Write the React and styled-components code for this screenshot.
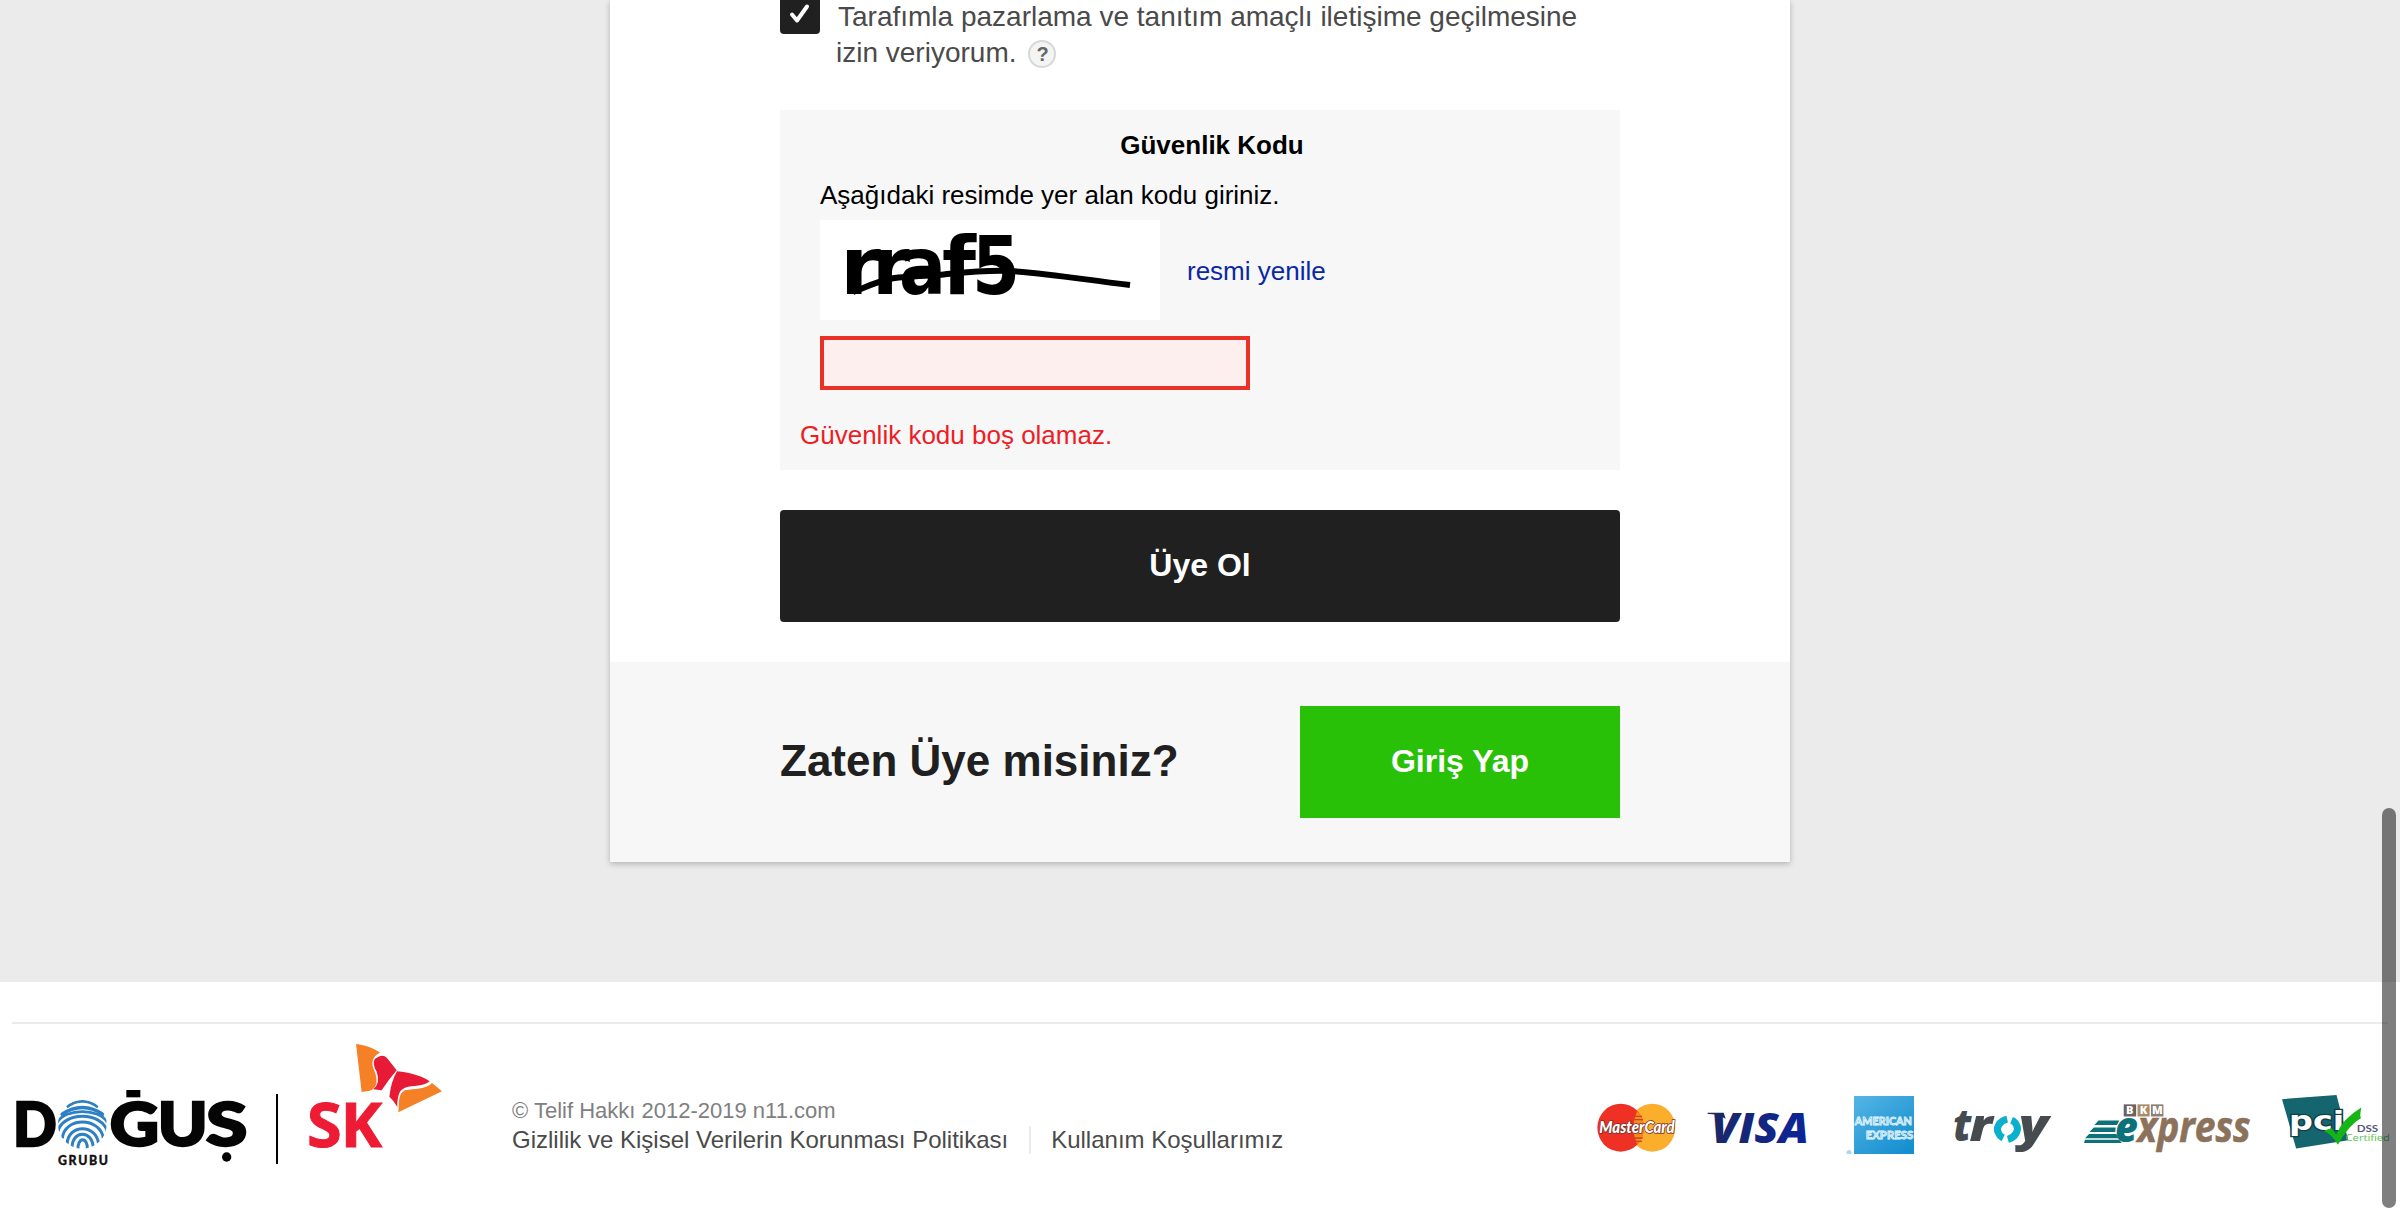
import React from "react";
import styled, { createGlobalStyle } from "styled-components";

const Global = createGlobalStyle`
  * { box-sizing: border-box; }
  html, body { margin: 0; height: 1212px; overflow: hidden; background: #fff; }
  body { font-family: "Liberation Sans", Arial, sans-serif; font-size: 26px; line-height: 36px; color: #000; }
`;

const Page = styled.div`
  height: 1212px;
  overflow: hidden;
`;
const Main = styled.main`
  display: flex;
  justify-content: center;
  align-items: flex-start;
  height: 982px;
  background: #ebebeb;
`;
const Card = styled.section`
  width: 1180px;
  height: 862px;
  background: #fff;
  box-shadow: 0 2px 6px rgba(0, 0, 0, 0.24);
`;
const FormArea = styled.div`
  display: flex;
  flex-direction: column;
  height: 662px;
  padding: 0 170px;
`;
const Consent = styled.label`
  display: flex;
  align-items: flex-start;
  gap: 16px;
  margin-top: -6px;
  height: 116px;
  flex: none;
`;
const Check = styled.span`
  display: flex;
  align-items: center;
  justify-content: center;
  flex: none;
  width: 40px;
  height: 40px;
  border-radius: 4px;
  background: #202020;
`;
const ConsentText = styled.span`
  display: flex;
  flex-direction: column;
  padding-top: 5px;
  color: #4a4a4a;
  font-size: 28px;
  white-space: nowrap;
`;
const ConsentLine = styled.span`
  display: flex;
  align-items: center;
  height: 36px;
  padding-left: ${(p) => p.$indent || "0"};
`;
const Help = styled.span`
  display: flex;
  align-items: center;
  justify-content: center;
  width: 28px;
  height: 28px;
  margin: 2px 0 0 12px;
  border: 2px solid #d8d8d8;
  border-radius: 50%;
  background: #f4f4f4;
  color: #666;
  font-size: 20px;
  font-weight: bold;
  line-height: 24px;
`;
const Captcha = styled.div`
  height: 360px;
  flex: none;
  padding: 17px 0 0 24px;
  background: #f7f7f7;
`;
const CaptchaTitle = styled.h3`
  margin: 0 0 14px;
  font-size: 26px;
  line-height: 36px;
  text-align: center;
`;
const CaptchaBody = styled.div`
  display: flex;
  flex-direction: column;
  align-items: flex-start;
  padding-left: 16px;
`;
const ImageRow = styled.div`
  display: flex;
  align-items: center;
  gap: 27px;
  margin: 7px 0 16px;
`;
const Picture = styled.svg`
  display: block;
  width: 340px;
  height: 100px;
  background: #fff;
`;
const Refresh = styled.a`
  padding-top: 2px;
  color: #0a28a3;
`;
const CodeInput = styled.input`
  display: block;
  width: 430px;
  height: 54px;
  margin: 0;
  padding: 0 10px;
  border: 4px solid #e93127;
  border-radius: 0;
  background: #feefef;
  outline: none;
`;
const ErrorText = styled.p`
  margin: 27px 0 0 -4px;
  color: #ee1c25;
`;
const Button = styled.button`
  display: flex;
  align-items: center;
  justify-content: center;
  width: ${(p) => p.$width};
  height: 112px;
  flex: none;
  margin: ${(p) => p.$margin || 0};
  padding: 0 0 3px;
  border: 0;
  border-radius: ${(p) => p.$radius || 0};
  background: ${(p) => p.$bg};
  color: #fff;
  font: bold 32px/40px "Liberation Sans", Arial, sans-serif;
`;
const LoginArea = styled.div`
  display: flex;
  align-items: center;
  justify-content: space-between;
  height: 200px;
  padding: 0 170px;
  background: #f7f7f7;
`;
const LoginTitle = styled.h2`
  margin: 0;
  padding-bottom: 3px;
  color: #202020;
  font-size: 44px;
  line-height: 54px;
`;
const Footer = styled.footer`
  height: 190px;
  margin: 40px 12px 0;
  border-top: 2px solid #ebebeb;
  display: flex;
  align-items: flex-start;
`;
const Logo = styled.svg`
  display: block;
  flex: none;
  overflow: visible;
  width: ${(p) => p.$w}px;
  height: ${(p) => p.$h}px;
  margin: ${(p) => p.$top}px 0 0 ${(p) => p.$left || 0}px;
`;
const LogoDivider = styled.span`
  flex: none;
  width: 2px;
  height: 70px;
  margin: 70px 0 0 29px;
  background: #000;
`;
const Legal = styled.div`
  margin: 73px 0 0 69px;
  white-space: nowrap;
`;
const Copyright = styled.div`
  color: #808080;
  font-size: 22px;
  line-height: 28px;
`;
const Links = styled.div`
  display: flex;
  align-items: center;
  height: 28px;
  margin-top: 1px;
  font-size: 24px;
  line-height: 28px;
`;
const LegalLink = styled.a`
  color: #4a4a4a;
  & + & {
    margin-left: 21px;
    padding-left: 20px;
    border-left: 2px solid #ebebeb;
  }
`;
const Payments = styled.div`
  display: flex;
  align-items: flex-start;
  margin: 0 -3px 0 auto;
`;
const ScrollThumb = styled.div`
  position: fixed;
  right: 4px;
  top: 808px;
  width: 14px;
  height: 400px;
  border-radius: 7px;
  background: rgba(0, 0, 0, 0.5);
`;

const OS = '"Open Sans", sans-serif';
const DV = '"DejaVu Sans", sans-serif';

const CaptchaImage = () => (
  <Picture viewBox="0 0 340 100">
    <g fontFamily={DV} fontWeight="700" fontSize="80">
      <text x="20" y="74" textLength="41" lengthAdjust="spacingAndGlyphs">r</text>
      <text x="52" y="74" textLength="38" lengthAdjust="spacingAndGlyphs">r</text>
      <text x="79" y="74" textLength="47" lengthAdjust="spacingAndGlyphs">a</text>
      <text x="122" y="74" textLength="34" lengthAdjust="spacingAndGlyphs">f</text>
      <text x="152" y="74" textLength="48" lengthAdjust="spacingAndGlyphs">5</text>
    </g>
    <path d="M33 72C46 67 56 62 69 59S103 56 119 55C140 53 160 50 190 51C235 54 265 60 310 65" fill="none" stroke="#000" strokeWidth="6" />
  </Picture>
);

const DogusLogo = () => (
  <Logo viewBox="48 264 693 240" $w={231} $h={80} $top={64} $left={4} role="img" aria-label="Doğuş Grubu">
    <defs>
      <clipPath id="thumb"><ellipse cx="247" cy="373" rx="73" ry="73" /></clipPath>
    </defs>
    <g fontFamily="Lato, sans-serif" fontWeight="900" fontSize="182" fill="#050505" stroke="#050505" strokeWidth="7">
      <text x="39" y="439" textLength="131" lengthAdjust="spacingAndGlyphs">D</text>
      <text x="329" y="439" textLength="148" lengthAdjust="spacingAndGlyphs">G</text>
      <text x="473" y="439" textLength="150" lengthAdjust="spacingAndGlyphs">U</text>
      <text x="618" y="439" textLength="124" lengthAdjust="spacingAndGlyphs">S</text>
    </g>
    <rect x="379" y="270" width="42" height="22" />
    <circle cx="680" cy="471" r="14" />
    <g clipPath="url(#thumb)" fill="none" stroke="#2c80c3" strokeWidth="9">
      <path d="M200 321Q247 287 294 321" />
      <path d="M182 345Q247 300 312 345" strokeWidth="11" />
      <path d="M172 367C195 324 299 324 322 367" strokeWidth="8" />
      <path d="M174 394C188 334 306 334 322 394" />
      <path d="M187 415C193 350 301 350 310 415" />
      <path d="M201 434C203 370 291 370 296 434" />
      <path d="M216 446C215 388 279 388 280 446" />
      <path d="M234 450C232 409 264 409 262 450" />
    </g>
    <text x="174" y="496" textLength="150" fontFamily="Lato, sans-serif" fontWeight="900" fontSize="37" fill="#111" stroke="#111" strokeWidth="1">GRUBU</text>
  </Logo>
);

const SkLogo = () => (
  <Logo viewBox="924 132 405 315" $w={135} $h={105} $top={20} $left={30}>
    <g fontFamily={OS} fontWeight="700" fontSize="184" fill="#ed1b34" stroke="#ed1b34" strokeWidth="3">
      <text x="921" y="440" textLength="104" lengthAdjust="spacingAndGlyphs">S</text>
      <text x="1022" y="440" textLength="124" lengthAdjust="spacingAndGlyphs">K</text>
    </g>
    <path fill="#f58025" d="M1068 132C1097 135 1121 145 1140 158C1115 170 1113 190 1123 212C1135 240 1131 265 1110 272L1085 276Z" />
    <path fill="#e81b37" d="M1136 170Q1150 163 1161 174L1190 211Q1165 240 1145 271L1120 268Q1142 248 1130 215Q1115 190 1125 176Z" />
    <path fill="#e81b37" d="M1191 214C1230 217 1265 228 1289 244C1270 260 1240 256 1215 263C1195 270 1192 295 1192 321Q1180 300 1168 290Q1173 245 1191 214Z" />
    <path fill="#f58025" d="M1296 249L1326 274L1195 337C1198 310 1193 280 1215 271C1245 265 1275 270 1296 249Z" />
  </Logo>
);

const MasterCard = () => (
  <Logo viewBox="54 99 234 150" $w={78} $h={50} $top={79}>
    <ellipse cx="220" cy="173" rx="69" ry="72" fill="#fbae2c" />
    <ellipse cx="125" cy="173" rx="70" ry="72" fill="#ee3124" />
    <path d="M174 124q-22 49 0 98q21-18 21-49t-21-49z" fill="#f58a22" />
    <path d="M162 139h27M158 149h33M158 204h33M162 214h27" stroke="#d0421e" strokeWidth="4" />
    <g fontFamily="Lato, sans-serif" fontStyle="italic" fontWeight="900" fontSize="48">
      <text x="61" y="190" textLength="226" lengthAdjust="spacingAndGlyphs" fill="#fff" stroke="#7a3328" strokeWidth="5" paintOrder="stroke">MasterCard</text>
    </g>
  </Logo>
);

const Visa = () => (
  <Logo viewBox="384 120 303 108" $w={101} $h={36} $top={86} $left={32}>
    <defs>
      <linearGradient id="visa" x1="0" x2="1">
        <stop offset="0" stopColor="#1b2866" />
        <stop offset="1" stopColor="#0b259b" />
      </linearGradient>
    </defs>
    <text x="396" y="220" textLength="294" lengthAdjust="spacingAndGlyphs" fontFamily={OS} fontWeight="800" fontStyle="italic" fontSize="128" fill="url(#visa)">VISA</text>
    <path d="M386 128H434L440 146Q414 131 386 132Z" fill="#1b2866" />
  </Logo>
);

const Amex = () => (
  <Logo viewBox="798 78 204 174" $w={68} $h={58} $top={72} $left={38}>
    <defs>
      <linearGradient id="amex" x1="0" y1="0" x2=".8" y2="1">
        <stop offset="0" stopColor="#55b5e4" />
        <stop offset="1" stopColor="#168fd0" />
      </linearGradient>
    </defs>
    <rect x="822" y="78" width="180" height="174" fill="url(#amex)" />
    <path d="M799 252Q799 240 807 240T815 252Z" fill="#a9d9f2" />
    <g fontFamily="Lato, sans-serif" fontWeight="700" fontSize="34" fill="#7fc4e8" stroke="#e6f6fd" strokeWidth="2.5">
      <text x="824" y="165" textLength="172" lengthAdjust="spacingAndGlyphs">AMERICAN</text>
      <text x="857" y="206" textLength="143" lengthAdjust="spacingAndGlyphs">EXPRESS</text>
    </g>
  </Logo>
);

const Troy = () => (
  <Logo viewBox="-78 101 288 150" $w={97} $h={50.5} $top={80} $left={40}>
    <g fontFamily={OS} fontWeight="800" fontStyle="italic" fontSize="132" fill="#464b4f">
      <text x="-80" y="210" textLength="54" lengthAdjust="spacingAndGlyphs">t</text>
      <text x="-32" y="210" textLength="68" lengthAdjust="spacingAndGlyphs">r</text>
      <text x="114" y="210" textLength="88" lengthAdjust="spacingAndGlyphs">y</text>
    </g>
    <g fill="none" stroke="#0cb0cf" strokeWidth="21">
      <path d="M80 146C56 151 45 173 54 187Q58 197 68 202" />
      <path d="M82 206C105 200 116 178 107 162Q103 153 93 149" />
    </g>
  </Logo>
);

const BkmExpress = () => (
  <Logo viewBox="309 98 501 152" $w={168.6} $h={51.2} $top={79} $left={33}>
    <rect x="427" y="102" width="37" height="36" fill="#6e6260" />
    <rect x="468" y="102" width="36" height="36" fill="#a98d69" />
    <rect x="508" y="102" width="37" height="36" fill="#8c8077" />
    <text x="434 475 511" y="132" fontFamily={OS} fontWeight="800" fontSize="33" fill="#fff">BKM</text>
    <path d="M352 150H414L407 163H340ZM338 171H403L402 184H325ZM324 190H405L411 203H312ZM312 207H414L421 217H309Z" fill="#0d717a" />
    <text x="401" y="215" textLength="68" lengthAdjust="spacingAndGlyphs" fontFamily={OS} fontWeight="800" fontStyle="italic" fontSize="126" fill="#0d717a">e</text>
    <text x="468" y="215" textLength="336" lengthAdjust="spacingAndGlyphs" fontFamily={OS} fontWeight="700" fontStyle="italic" fontSize="126" fill="#8c715b" stroke="#8c715b" strokeWidth="2">xpress</text>
  </Logo>
);

const Pci = () => (
  <Logo viewBox="900 70 327 166" $w={110} $h={56} $top={70} $left={28}>
    <path d="M903 85L1065 73L1100 207L945 232Z" fill="#14656d" />
    <text x="924" y="177" textLength="164" lengthAdjust="spacingAndGlyphs" fontFamily={DV} fontWeight="700" fontSize="80" fill="#fff" stroke="#123f4c" strokeWidth="8" paintOrder="stroke">pci</text>
    <path d="M1027 180L1050 171L1064 190Q1085 142 1139 110Q1133 137 1138 141Q1100 163 1069 221Q1051 189 1027 180Z" fill="#16b516" />
    <text x="1125" y="182" textLength="64" lengthAdjust="spacingAndGlyphs" fontFamily="Lato, sans-serif" fontWeight="700" fontSize="27" fill="#56577c">DSS</text>
    <text x="1092" y="210" textLength="132" lengthAdjust="spacingAndGlyphs" fontFamily={OS} fontSize="29" fill="#58c558">Certified</text>
  </Logo>
);

export default function App() {
  return (
    <Page>
      <Global />
      <Main>
        <Card>
          <FormArea>
            <Consent>
              <Check>
                <svg width="24" height="24" viewBox="0 0 24 24">
                  <path d="M4 12.5L9 18.5L19 4.5" fill="none" stroke="#fff" strokeWidth="4" strokeLinecap="round" strokeLinejoin="round" />
                </svg>
              </Check>
              <ConsentText>
                <ConsentLine $indent="2px">Tarafımla pazarlama ve tanıtım amaçlı iletişime geçilmesine</ConsentLine>
                <ConsentLine>
                  izin veriyorum.
                  <Help>?</Help>
                </ConsentLine>
              </ConsentText>
            </Consent>
            <Captcha>
              <CaptchaTitle>Güvenlik Kodu</CaptchaTitle>
              <CaptchaBody>
                <span>Aşağıdaki resimde yer alan kodu giriniz.</span>
                <ImageRow>
                  <CaptchaImage />
                  <Refresh>resmi yenile</Refresh>
                </ImageRow>
                <CodeInput />
              </CaptchaBody>
              <ErrorText>Güvenlik kodu boş olamaz.</ErrorText>
            </Captcha>
            <Button $width="840px" $bg="#202020" $radius="4px" $margin="40px 0 0">Üye Ol</Button>
          </FormArea>
          <LoginArea>
            <LoginTitle>Zaten Üye misiniz?</LoginTitle>
            <Button $width="320px" $bg="#28c107">Giriş Yap</Button>
          </LoginArea>
        </Card>
      </Main>
      <Footer>
        <DogusLogo />
        <LogoDivider />
        <SkLogo />
        <Legal>
          <Copyright>© Telif Hakkı 2012-2019 n11.com</Copyright>
          <Links>
            <LegalLink>Gizlilik ve Kişisel Verilerin Korunması Politikası</LegalLink>
            <LegalLink>Kullanım Koşullarımız</LegalLink>
          </Links>
        </Legal>
        <Payments>
          <MasterCard />
          <Visa />
          <Amex />
          <Troy />
          <BkmExpress />
          <Pci />
        </Payments>
      </Footer>
      <ScrollThumb />
    </Page>
  );
}
